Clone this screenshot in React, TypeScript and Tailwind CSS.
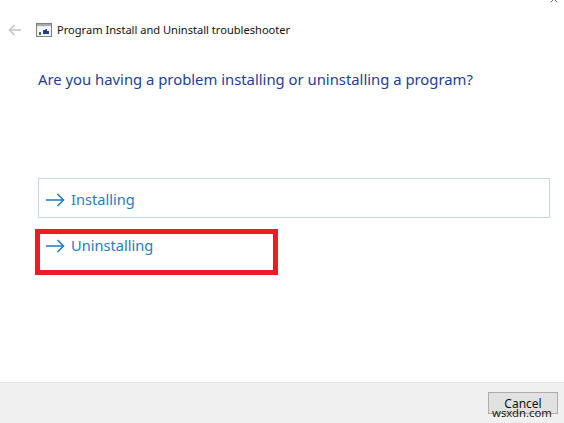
import { X } from "lucide-react";

const font = { fontFamily: '"Noto Sans", sans-serif' };

function ProgramIcon() {
  return (
    <svg width="16" height="14" viewBox="0 0 16 14" className="shrink-0">
      <rect x="0.5" y="0.5" width="15" height="13" fill="#eceef0" stroke="#7d8288" />
      <rect x="1" y="1" width="14" height="2" fill="#a4a9ae" />
      <rect x="2" y="4" width="12" height="9" fill="#f7f8f9" />
      <path d="M7 11V7h2l1-1h1v2h2v3z" fill="#1f3f8f" />
      <rect x="3" y="9" width="2" height="3" fill="#4d6650" />
    </svg>
  );
}

// the long thin arrow used by the command links
function LinkArrow() {
  return (
    <svg width="19" height="14" viewBox="0 0 19 14" fill="none" stroke="#1a78c2" strokeWidth="1.5" className="shrink-0">
      <path d="M0 7h17.5" />
      <path d="M11.5 1l6 6-6 6" />
    </svg>
  );
}

function BackArrow() {
  return (
    <svg width="13" height="12" viewBox="0 0 13 12" fill="none" stroke="#c4c4c4" strokeWidth="1.6" className="shrink-0">
      <path d="M13 6H1.5" />
      <path d="M6.5 1l-5 5 5 5" />
    </svg>
  );
}

export default function App() {
  return (
    <div className="w-[564px] h-[423px] bg-white flex flex-col overflow-hidden relative" style={font}>
      <X className="absolute right-[4px] top-[-7px] w-[12px] h-[12px] text-[#333]" strokeWidth={1.5} />

      <div className="flex-1 flex flex-col">
        <div className="flex items-center pt-[22px] pl-[8px] h-[38px]">
          <BackArrow />
          <div className="ml-[15px]">
            <ProgramIcon />
          </div>
          <span className="ml-[5px] text-[11.1px] leading-[16px] text-[#111]">
            Program Install and Uninstall troubleshooter
          </span>
        </div>

        <h1 className="ml-[38px] mt-[30px] text-[14.83px] leading-[22px] font-normal text-[#1c3f94]">
          Are you having a problem installing or uninstalling a program?
        </h1>

        <div className="ml-[38px] mr-[14px] mt-[88px]">
          <div className="flex items-center h-10 w-full border border-[#c3d9ea] pl-[7px] pt-[3px] gap-[6px]">
            <LinkArrow />
            <span className="text-[14.6px] text-[#2a7bbd]">Installing</span>
          </div>
        </div>

        <div className="ml-[35px] mt-[11px] w-[243px] h-[46px] border-[5px] border-[#ed1c24] pl-[6px] pb-[12px] flex items-center gap-[6px]">
          <LinkArrow />
          <span className="text-[14.6px] text-[#2a7bbd]">Uninstalling</span>
        </div>
      </div>

      <div className="h-[41px] bg-[#f0f0f0] border-t border-[#e2e2e2] flex justify-end pt-[9px] pr-[6px]">
        <div className="w-[70px] h-[22px] bg-[#e1e1e1] border border-[#adadad] text-[12px] leading-[21px] text-center text-[#111]">
          Cancel
        </div>
      </div>

      <span className="absolute left-[492px] top-[405px] text-[11.3px] leading-[16px] text-[#222]">wsxdn.com</span>
    </div>
  );
}
